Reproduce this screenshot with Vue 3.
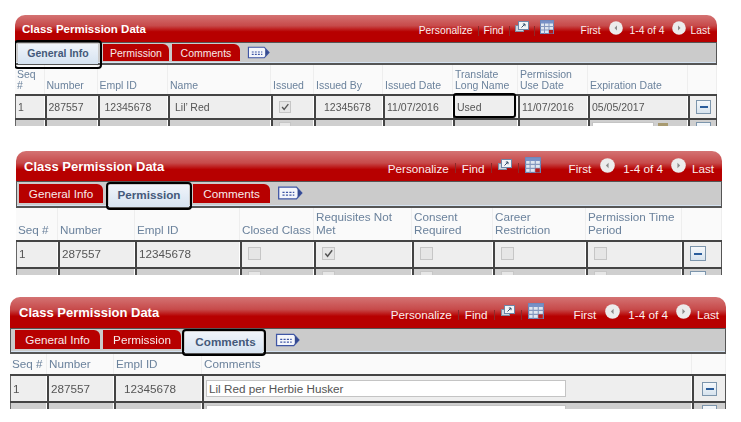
<template>
  <div class="page">
    <section v-for="p in panels" :key="p.id" class="panel" :class="p.id">
      <header class="title-bar">
        <span class="title">Class Permission Data</span>
        <nav class="tools">
          <span class="link">Personalize</span>
          <i class="sep"></i>
          <span class="link">Find</span>
          <i class="sep"></i>
          <svg class="ico-zoom" viewBox="0 0 14 12">
            <rect x="0.5" y="4.5" width="8" height="6" fill="#cfd6df" stroke="#7d8da3" />
            <rect x="3.5" y="0.5" width="10" height="8" fill="#f2f5f8" stroke="#6d86a8" />
            <path d="M6.5 6.5 L10 3 M7.8 3 H10 V5.2" fill="none" stroke="#35506f" stroke-width="1" />
          </svg>
          <i class="sep"></i>
          <svg class="ico-grid" viewBox="0 0 14 14">
            <rect x="0.5" y="0.5" width="13" height="13" fill="#dfe6f0" stroke="#6a83b3" />
            <rect x="0.5" y="0.5" width="13" height="3" fill="#7690c6" />
            <path d="M4.5 3 V14 M9 3 V14 M0.5 6.5 H13.5 M0.5 10 H13.5" stroke="#8498bf" stroke-width="1" />
            <rect x="9" y="10" width="4" height="3.5" fill="#b81a1a" />
          </svg>
          <span class="link first">First</span>
          <svg class="ico-nav prev" viewBox="0 0 14 14">
            <circle cx="7" cy="7" r="6.8" fill="#ececec" />
            <path d="M8 4.5 V9.5 L5.5 7 Z" fill="#8a8a8a" />
          </svg>
          <span class="link count">1-4 of 4</span>
          <svg class="ico-nav next" viewBox="0 0 14 14">
            <circle cx="7" cy="7" r="6.8" fill="#ececec" />
            <path d="M6 4.5 V9.5 L8.5 7 Z" fill="#8a8a8a" />
          </svg>
          <span class="link last">Last</span>
        </nav>
      </header>

      <div class="tab-bar">
        <span
          v-for="t in tabs"
          :key="t"
          class="tab"
          :class="{ active: t === p.active }"
        >{{ t }}</span>
        <svg class="ico-tabs" viewBox="0 0 24 13">
          <path d="M1.5 1 H18 L23 6.5 L18 12 H1.5 Z" fill="#f4f6fb" stroke="#3f56a5" stroke-width="1.2" />
          <path d="M19 2.5 L23 6.5 L19 10.5 Z" fill="#34498f" />
          <path d="M5 6 H16 M5 8.5 H16" stroke="#3f56a5" stroke-width="1.2" stroke-dasharray="2 1.2" />
        </svg>
      </div>

      <div class="grid head" :style="{ gridTemplateColumns: p.cols }">
        <div v-for="(h, i) in p.heads" :key="i" class="th">{{ h }}</div>
      </div>

      <div class="grid row one" :style="{ gridTemplateColumns: p.cols }">
        <div v-for="(c, i) in p.cells" :key="i" class="td" :class="c.cls">
          <span v-if="c.t === 'text'">{{ c.v }}</span>
          <span v-else-if="c.t === 'check'" class="box" :class="{ on: c.v }">
            <svg v-if="c.v" viewBox="0 0 12 12"><path d="M2.5 6 L5 9 L10 2.5" fill="none" stroke="#555" stroke-width="1.6" /></svg>
          </span>
          <span v-else-if="c.t === 'input'" class="input" :style="{ width: c.w + 'px' }">{{ c.v }}</span>
          <span v-else-if="c.t === 'minus'" class="minus"><i></i></span>
          <span v-if="c.mark" class="mark"></span>
        </div>
      </div>

      <div class="grid row two" :style="{ gridTemplateColumns: p.cols }">
        <div v-for="(c, i) in p.cells" :key="i" class="td" :class="c.cls">
          <span v-if="c.t === 'check'" class="box"></span>
          <span v-else-if="c.t === 'input'" class="input" :style="{ width: c.w + 'px' }"></span>
          <span v-else-if="c.t === 'minus'" class="minus"></span>
          <template v-else-if="c.date2">
            <span class="input date"></span>
            <span class="cal"></span>
          </template>
        </div>
      </div>
    </section>
  </div>
</template>

<script setup>
const tabs = ['General Info', 'Permission', 'Comments']

const text = (v, cls = '') => ({ t: 'text', v, cls })
const check = (v = false) => ({ t: 'check', v, cls: 'boxed' })
const minus = { t: 'minus', cls: 'boxed' }

const panels = [
  {
    id: 'p1',
    active: 'General Info',
    cols: '29.5px 53px 70.5px 103px 43px 69px 70px 65px 70px 100px 29px',
    heads: ['Seq #', 'Number', 'Empl ID', 'Name', 'Issued', 'Issued By', 'Issued Date', 'Translate Long Name', 'Permission Use Date', 'Expiration Date', ''],
    cells: [
      text('1'),
      text('287557'),
      text('12345678', 'ind-s'),
      text('Lil’ Red', 'ind-s'),
      check(true),
      text('12345678', 'ind'),
      text('11/07/2016'),
      { ...text('Used'), mark: true },
      text('11/07/2016'),
      { ...text('05/05/2017'), date2: true },
      minus
    ]
  },
  {
    id: 'p2',
    active: 'Permission',
    cols: '42px 77px 105px 74px 98px 81px 93px 96px 40px',
    heads: ['Seq #', 'Number', 'Empl ID', 'Closed Class', 'Requisites Not Met', 'Consent Required', 'Career Restriction', 'Permission Time Period', ''],
    cells: [
      text('1'),
      text('287557'),
      text('12345678'),
      check(),
      check(true),
      check(),
      check(),
      check(),
      minus
    ]
  },
  {
    id: 'p3',
    active: 'Comments',
    cols: '37px 67px 88px 490px 34px',
    heads: ['Seq #', 'Number', 'Empl ID', 'Comments', ''],
    cells: [
      text('1'),
      text('287557'),
      text('12345678', 'ind'),
      { t: 'input', v: 'Lil Red per Herbie Husker', w: 360 },
      minus
    ]
  }
]
</script>

<style>
body {
  background: #fff;
}
</style>

<style scoped>
.page {
  width: 741px;
  height: 422px;
  overflow: hidden;
  font-family: "Liberation Sans", Arial, sans-serif;
}

.panel {
  position: relative;
  overflow: hidden;
  filter: blur(0.35px);
  --ink: #555;
}
.panel.p1 {
  width: 702px;
  margin: 15px 0 0 15px;
  font-size: 10.5px;
}
.panel.p2 {
  width: 706px;
  margin: 25px 0 0 16px;
  font-size: 11.7px;
}
.panel.p3 {
  width: 716px;
  margin: 22px 0 0 10px;
  font-size: 11.7px;
}

.title-bar {
  display: flex;
  align-items: center;
  justify-content: space-between;
  background: linear-gradient(#d47373, #c74a4a 40%, #b70000 62%, #b70000);
  border-radius: 10px 10px 0 0;
  color: #fff;
  box-sizing: border-box;
}
.p1 .title-bar {
  height: 27px;
  padding: 1px 7px 0 7px;
}
.p2 .title-bar {
  height: 30px;
  padding: 0 8px 0 8px;
}
.p3 .title-bar {
  height: 31px;
  padding: 0 7px 0 9px;
}
.title {
  font-weight: bold;
  font-size: 11.5px;
}
.p2 .title,
.p3 .title {
  font-size: 13px;
}

.tools {
  display: flex;
  align-items: center;
  gap: 5px;
  padding-top: 3px;
  font-size: 10.3px;
}
.p2 .tools,
.p3 .tools {
  gap: 6px;
  padding-top: 4px;
  font-size: 11.7px;
}
.link {
  color: #fbeeee;
}
.sep {
  width: 1px;
  height: 10px;
  background: #8c2a2a;
}
.ico-zoom {
  width: 14px;
  height: 12px;
  margin-top: -7px;
}
.ico-grid {
  width: 14px;
  height: 14px;
  margin-top: -7px;
}
.p2 .ico-grid,
.p3 .ico-grid {
  width: 16px;
  height: 16px;
}
.ico-nav {
  width: 14px;
  height: 14px;
  margin-top: -6px;
}
.p2 .ico-nav,
.p3 .ico-nav {
  width: 15px;
  height: 15px;
}
.first {
  margin-left: 22px;
}
.prev {
  margin-left: 3px;
}
.count {
  margin-left: 2px;
  margin-right: 2px;
}
.p3 .first {
  margin-left: 24px;
}

.tab-bar {
  display: flex;
  align-items: flex-end;
  box-sizing: border-box;
  background: #cbcbcb;
  border: 1px solid #555;
  border-bottom: 2px solid #555;
  box-shadow: inset 0 -1px 0 #d5e3f2;
}
.p1 .tab-bar {
  height: 23px;
  padding-left: 2px;
}
.p2 .tab-bar {
  height: 27px;
  padding-left: 2px;
}
.p3 .tab-bar {
  height: 26px;
  padding-left: 4px;
}
.tab {
  position: relative;
  display: flex;
  align-items: center;
  justify-content: center;
  flex: none;
  box-sizing: border-box;
  background: #b70000;
  color: #f8eaea;
  border-radius: 0 6px 0 0;
}
.p1 .tab {
  height: 17px;
  margin-bottom: 2px;
}
.p2 .tab,
.p3 .tab {
  height: 19px;
  margin-bottom: 3px;
}
.tab.active {
  background: linear-gradient(#f0f4fa, #d6e3f1);
  color: #44597a;
  font-weight: bold;
  z-index: 1;
  border-radius: 0;
  padding-bottom: 2px;
}
.p1 .tab.active {
  height: 20px;
  margin-bottom: -1px;
}
.p2 .tab.active {
  height: 22px;
  margin-bottom: -1px;
  padding-bottom: 4px;
}
.p3 .tab.active {
  height: 21px;
  margin-bottom: -1px;
  padding: 0 0 3px 3px;
}
.tab.active::after {
  content: "";
  position: absolute;
  inset: -3px;
  border: 2.5px solid #000;
  border-radius: 4px;
}
.p1 .tab.active::after {
  inset: -4px -4px -5px;
}
.p1 .tab:nth-child(1) { width: 80px; }
.p1 .tab:nth-child(2) { width: 66px; margin-left: 5px; }
.p1 .tab:nth-child(3) { width: 68px; margin-left: 3px; }
.p2 .tab:nth-child(1) { width: 84px; }
.p2 .tab:nth-child(2) { width: 80px; margin-left: 6px; }
.p2 .tab:nth-child(3) { width: 77px; margin-left: 4px; }
.p3 .tab:nth-child(1) { width: 85px; }
.p3 .tab:nth-child(2) { width: 78px; margin-left: 3px; }
.p3 .tab:nth-child(3) { width: 78px; margin-left: 4px; }
.ico-tabs {
  align-self: center;
  flex: none;
  margin-bottom: 2px;
}
.p1 .ico-tabs {
  width: 23px;
  height: 13px;
  margin-left: 7px;
}
.p2 .ico-tabs {
  width: 26px;
  height: 14px;
  margin-left: 7px;
}
.p3 .ico-tabs {
  width: 25px;
  height: 14px;
  margin-left: 12px;
}

.grid {
  display: grid;
}
.head {
  background: #fafafa;
  color: #6b829c;
}
.p1 .head { height: 29px; }
.p2 .head { height: 32px; }
.p3 .head { height: 20px; }
.th {
  display: flex;
  align-items: flex-end;
  padding: 0 2px 2px;
  line-height: 1.1;
  border-right: 1px solid #eee;
}
.p2 .th {
  padding-bottom: 3px;
}
.p3 .th {
  align-items: center;
  padding-bottom: 0;
  padding-top: 1px;
}

.row {
  background: #eee;
  color: var(--ink);
  border-top: 2px solid #444;
  box-sizing: border-box;
}
.p1 .row.one { height: 24px; }
.p2 .row.one { height: 27px; }
.p3 .row.one { height: 27px; }
.row.two {
  height: 8px;
  overflow: hidden;
  background: #cfcfcf;
}
.td {
  position: relative;
  display: flex;
  align-items: center;
  padding-left: 2px;
  border-left: 2px solid #444;
  border-right: 1px solid #fff;
  box-sizing: border-box;
  min-width: 0;
  white-space: nowrap;
}
.p2 .one .td {
  padding-bottom: 2px;
}
.td:first-child {
  border-left: 1px solid #666;
}
.td:last-child {
  border-right: 1px solid #555;
}
.td.ind {
  padding-left: 8px;
}
.td.ind-s {
  padding-left: 5px;
}
.td.boxed {
  padding-left: 6px;
}
.p3 .td.boxed {
  padding-left: 8px;
}
.two .td {
  align-items: flex-start;
  padding-top: 2px;
}

.box {
  display: block;
  width: 12px;
  height: 12px;
  background: #e6e6e6;
  border: 1px solid #c6c6c6;
  box-sizing: border-box;
  flex: none;
}
.p2 .box {
  width: 13px;
  height: 13px;
}
.box svg {
  display: block;
  width: 100%;
  height: 100%;
}
.input {
  display: block;
  box-sizing: border-box;
  height: 17px;
  line-height: 15px;
  background: #fff;
  border: 1px solid #c4c4c4;
  padding-left: 2px;
  color: #555;
}
.input.date {
  width: 62px;
}
.cal {
  display: block;
  width: 10px;
  height: 6px;
  margin: 1px 0 0 4px;
  background: #a89a70;
}
.minus {
  display: flex;
  align-items: center;
  justify-content: center;
  width: 15px;
  height: 14px;
  background: linear-gradient(#f5f8fb, #d7e3ee);
  border: 1px solid #7c95ac;
  box-sizing: border-box;
}
.p2 .minus {
  width: 16px;
  height: 15px;
}
.minus i {
  display: block;
  width: 8px;
  height: 2px;
  background: #2a5d9c;
}
.mark {
  position: absolute;
  inset: -3px 1px 0 -2px;
  border: 2.5px solid #000;
  border-radius: 3px;
}
</style>
